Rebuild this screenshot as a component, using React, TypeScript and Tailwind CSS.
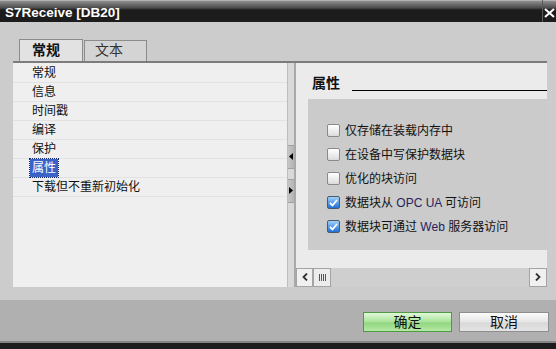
import React from "react";

const items = ["常规", "信息", "时间戳", "编译", "保护", "属性", "下载但不重新初始化"];

const options: { label: React.ReactNode; checked: boolean }[] = [
  { label: "仅存储在装载内存中", checked: false },
  { label: "在设备中写保护数据块", checked: false },
  { label: "优化的块访问", checked: false },
  {
    label: (
      <>
        数据块从 <span className="text-[#27235e]">OPC UA</span> 可访问
      </>
    ),
    checked: true,
  },
  {
    label: (
      <>
        数据块可通过 <span className="text-[#27235e]">Web</span> 服务器访问
      </>
    ),
    checked: true,
  },
];

function CheckBox({ checked }: { checked: boolean }) {
  if (checked) {
    return (
      <div className="w-[13px] h-[13px] rounded-[2px] border border-[#4a5a6a] bg-[linear-gradient(to_bottom,#9fd0fa,#1f6fd6)] flex items-center justify-center">
        <svg width="9" height="8" viewBox="0 0 9 8">
          <path d="M1 4 L3.5 6.5 L8 1" stroke="#ffffff" strokeWidth="1.8" fill="none" />
        </svg>
      </div>
    );
  }
  return (
    <div className="w-[13px] h-[13px] rounded-[2px] border border-[#8a8a8a] bg-[linear-gradient(to_bottom,#ffffff,#dcdcdc)]" />
  );
}

export default function App() {
  return (
    <div className="w-[556px] h-[349px] flex flex-col bg-[#cccccc] overflow-hidden font-['Liberation_Sans','Noto_Sans_CJK_SC',sans-serif] text-[#111111]">
      {/* Title bar */}
      <div className="h-[22px] flex items-stretch bg-[linear-gradient(to_bottom,#d6d6d6_0px,#8e8e8e_1px,#4a4a4a_8px,#1c1c1c_10px)]">
        <div className="flex-1 pl-[5px] pt-[5px] text-white font-bold text-[13.5px] leading-[15px]">S7Receive [DB20]</div>
        <div className="w-[14px] border-l border-[#5a5a5a] flex items-center justify-center pt-[5px]">
          <svg width="11" height="10" viewBox="0 0 11 10">
            <path d="M1 1 L10 9 M10 1 L1 9" stroke="#ffffff" strokeWidth="2" />
          </svg>
        </div>
      </div>

      {/* Body */}
      <div className="flex-1 flex flex-col pl-[13px] pr-[9px] pt-[17px] pb-[13px]">
        <div className="h-[22px] flex items-end pl-[6px]">
          <div className="h-[22px] w-[64px] border border-b-0 border-[#8c8c8c] bg-[#e2e2e2] pl-[12px] pt-[2px] text-[14px] leading-[17px] font-bold">
            常规
          </div>
          <div className="h-[21px] w-[63px] ml-[1px] border border-b-0 border-[#8c8c8c] bg-[#d4d4d4] pl-[10px] pt-[1px] text-[14px] leading-[17px] text-[#333333]">
            文本
          </div>
        </div>

        <div className="flex-1 flex border-t-2 border-[#7c7c7c]">
          {/* Left list */}
          <div className="w-[274px] bg-[#efefef] pt-[1px]">
            {items.map((it) => (
              <div key={it} className="h-[19px] border-b border-[#e2e2e2] pl-[17px] flex items-center">
                {it === "属性" ? (
                  <span className="px-[2px] h-[18px] flex items-center bg-[#3a63c8] text-white outline outline-1 outline-dotted outline-[#1a2a60] text-[12px] leading-[14px]">
                    {it}
                  </span>
                ) : (
                  <span className="px-[2px] text-[12px] leading-[14px]">{it}</span>
                )}
              </div>
            ))}
          </div>

          {/* Splitter */}
          <div className="w-[9px] bg-[#d9d9d9] border-l border-[#bdbdbd] border-r-2 border-r-[#a9a9a9] flex flex-col">
            <div className="h-[82px]" />
            <div className="h-[24px] bg-[linear-gradient(to_right,#c6c6c6,#b4b4b4)] border-y border-[#a0a0a0] flex items-center justify-center">
              <svg width="4" height="7" viewBox="0 0 4 7">
                <path d="M4 0 L0 3.5 L4 7 Z" fill="#000000" />
              </svg>
            </div>
            <div className="h-[10px]" />
            <div className="h-[24px] bg-[linear-gradient(to_right,#c6c6c6,#b4b4b4)] border-y border-[#a0a0a0] flex items-center justify-center">
              <svg width="4" height="7" viewBox="0 0 4 7">
                <path d="M0 0 L4 3.5 L0 7 Z" fill="#000000" />
              </svg>
            </div>
          </div>

          {/* Right panel */}
          <div className="flex-1 bg-[#ebebeb] flex flex-col">
            <div className="h-[36px] flex items-start pl-[16px] pt-[12px]">
              <span className="text-[14px] leading-[17px] font-bold">属性</span>
              <div className="flex-1 ml-[12px] mt-[15px] h-px bg-black" />
            </div>
            <div className="ml-[12px] h-[151px] bg-[#cbcbcb] pt-[20px] pl-[19px]">
              {options.map((o, i) => (
                <div key={i} className="h-[24px] flex items-center gap-[5px]">
                  <CheckBox checked={o.checked} />
                  <span className="text-[12px] leading-[14px]">{o.label}</span>
                </div>
              ))}
            </div>
            <div className="h-[18px]" />
            <div className="h-[19px] bg-[#cfcfcf] flex items-stretch">
              <div className="w-[17px] border border-[#a4a4a4] bg-[#f0f0f0] flex items-center justify-center">
                <svg width="6" height="8" viewBox="0 0 6 8">
                  <path d="M5 0.5 L1.5 4 L5 7.5" stroke="#333333" strokeWidth="1.8" fill="none" />
                </svg>
              </div>
              <div className="w-[18px] border border-[#a4a4a4] bg-[#ececec] flex items-center justify-center">
                <svg width="7" height="7" viewBox="0 0 7 7">
                  <path d="M0.5 0 V7 M2.5 0 V7 M4.5 0 V7 M6.5 0 V7" stroke="#555555" strokeWidth="1" />
                </svg>
              </div>
              <div className="flex-1" />
              <div className="w-[18px] border border-[#a4a4a4] bg-[#f0f0f0] flex items-center justify-center">
                <svg width="6" height="8" viewBox="0 0 6 8">
                  <path d="M1 0.5 L4.5 4 L1 7.5" stroke="#333333" strokeWidth="1.8" fill="none" />
                </svg>
              </div>
            </div>
          </div>
        </div>
      </div>

      {/* Footer */}
      <div className="h-[42px] bg-[#b0b0b0] flex justify-end items-start gap-[7px] pt-[12px] pr-[7px]">
        <button className="w-[89px] h-[20px] border border-[#4e9a44] bg-[linear-gradient(to_bottom,#e0f8d8,#a8e398_50%,#8fd67f_55%,#b6e9a6)] text-[14px] leading-[16px] flex items-center justify-center">
          确定
        </button>
        <button className="w-[90px] h-[20px] border border-[#8e8e8e] bg-[linear-gradient(to_bottom,#fbfbfb,#e6e6e6_50%,#d8d8d8_55%,#e4e4e4)] text-[14px] leading-[16px] flex items-center justify-center">
          取消
        </button>
      </div>
      <div className="h-[8px] border-t-2 border-[#858585] bg-[#1c1c1c]" />
    </div>
  );
}
